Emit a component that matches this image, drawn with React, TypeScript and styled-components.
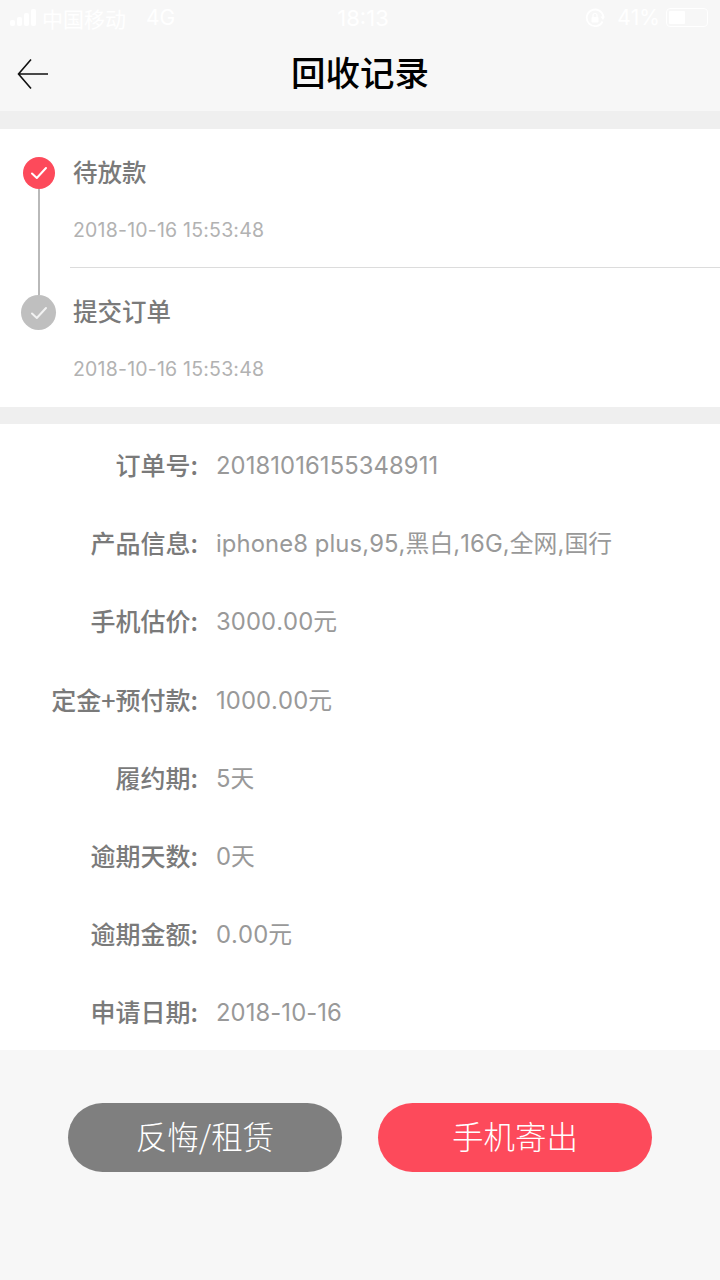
import * as React from 'react';
import styled, { createGlobalStyle } from 'styled-components';

const sans = 'Inter, "Noto Sans CJK SC", sans-serif';
const cjk = '"Noto Sans CJK SC", sans-serif';

const GlobalStyle = createGlobalStyle`
  html, body {
    margin: 0;
    background: #f7f7f7;
  }
  body {
    font-family: ${sans};
    font-kerning: none;
  }
`;

const Page = styled.div`
  display: flex;
  flex-direction: column;
  height: 1280px;
  overflow: hidden;
  background: #f7f7f7;
`;

const StatusBar = styled.div`
  align-items: center;
  color: #fff;
  display: grid;
  font-size: 21px;
  grid-template-columns: 1fr auto 1fr;
  height: 38px;
  padding: 0 12px 3px 10px;
  box-sizing: border-box;
`;

const StatusLeft = styled.div`
  align-items: center;
  display: flex;
  gap: 6px;
`;

const StatusRight = styled.div`
  align-items: center;
  display: flex;
  gap: 6px;
  justify-content: flex-end;
`;

const Carrier = styled.span`
  margin-right: 14px;
`;

const Clock = styled.span`
  font-size: 22px;
  margin-left: 8px;
`;

const Percent = styled.span`
  font-size: 21px;
  margin-left: 6px;
`;

const Signal = styled.div`
  align-items: flex-end;
  display: flex;
  gap: 2px;
  height: 17px;
`;

const SignalBar = styled.i<{ $h: number }>`
  background: #fff;
  border-radius: 2px;
  display: block;
  height: ${(p) => p.$h}px;
  width: 5px;
`;

const Battery = styled.div`
  border: 1.5px solid #fff;
  border-radius: 4px;
  box-sizing: border-box;
  height: 19px;
  padding: 2px;
  width: 42px;
`;

const BatteryLevel = styled.div`
  background: #fff;
  border-radius: 1px;
  height: 100%;
  width: 45%;
`;

const NavBar = styled.header`
  align-items: center;
  display: grid;
  grid-template-columns: 1fr auto 1fr;
  height: 73px;
  padding-bottom: 2px;
  box-sizing: border-box;
`;

const BackButton = styled.button`
  background: none;
  border: 0;
  display: flex;
  margin-left: 17px;
  padding: 0;
  width: 32px;
`;

const Title = styled.h1`
  color: #000;
  font-family: ${cjk};
  font-size: 34.5px;
  font-weight: 500;
  line-height: 48px;
  margin: -6px 0 0;
`;

const Band = styled.div<{ $h: number }>`
  background: #efefef;
  height: ${(p) => p.$h}px;
`;

const Section = styled.section`
  background: #fff;
`;

const Step = styled.div`
  display: grid;
  grid-template-columns: 70px 1fr;
  height: 139px;
`;

const Rail = styled.div<{ $last?: boolean }>`
  align-items: center;
  box-sizing: border-box;
  display: flex;
  flex-direction: column;
  padding-left: 7px;
  padding-top: ${(p) => (p.$last ? 0 : 28)}px;
`;

const Connector = styled.div<{ $grow?: boolean }>`
  background: #b9b9b9;
  flex: ${(p) => (p.$grow ? 1 : '0 0 27px')};
  width: 2px;
`;

const Dot = styled.div<{ $active?: boolean }>`
  align-items: center;
  background: ${(p) => (p.$active ? '#fd4a5b' : '#bfbfbf')};
  border-radius: 50%;
  display: flex;
  flex: none;
  height: ${(p) => (p.$active ? 32 : 35)}px;
  justify-content: center;
  width: ${(p) => (p.$active ? 32 : 35)}px;
`;

const StepBody = styled.div<{ $last?: boolean }>`
  border-bottom: ${(p) => (p.$last ? 'none' : '1px solid #dcdcdc')};
  display: flex;
  flex-direction: column;
  padding: 25px 0 0 3px;
`;

const StepTitle = styled.div`
  color: #7a7a7a;
  font-family: ${cjk};
  font-size: 24.5px;
  font-weight: 500;
  line-height: 36px;
`;

const StepTime = styled.div`
  color: #b2b2b2;
  font-size: 19.5px;
  letter-spacing: 0.2px;
  line-height: 24px;
  margin-top: 28px;
`;

const Details = styled.section`
  background: #fff;
  box-sizing: border-box;
  height: 626px;
  padding-top: 3px;
`;

const Row = styled.div`
  align-items: center;
  column-gap: 18px;
  display: grid;
  font-size: 23.8px;
  grid-template-columns: 198px 1fr;
  height: 78.2px;
  line-height: 34px;
`;

const Label = styled.div`
  color: #7a7a7a;
  font-family: ${cjk};
  font-size: 25px;
  font-weight: 500;
  margin-top: -4px;
  text-align: right;
  white-space: nowrap;
`;

const Value = styled.div`
  color: #999;
  letter-spacing: 0.1px;
  white-space: nowrap;
`;

const Actions = styled.div`
  display: flex;
  gap: 36px;
  justify-content: center;
  padding-top: 53px;
`;

const Action = styled.button<{ $primary?: boolean }>`
  background: ${(p) => (p.$primary ? '#fd4a5b' : '#7f7f7f')};
  border: 0;
  border-radius: 35px;
  color: #fff;
  font-family: ${cjk};
  font-size: 31.5px;
  font-weight: 300;
  height: 69px;
  padding: 0 0 5px;
  width: 274px;
`;

const Check = ({ color }: { color: string }) => (
  <svg width="18" height="14" viewBox="0 0 18 14" fill="none">
    <path d="M2 7.5 L6.8 12 L16 2" stroke={color} strokeWidth="2" strokeLinecap="round" strokeLinejoin="round" />
  </svg>
);

const rows = [
  ['订单号:', '20181016155348911'],
  ['产品信息:', 'iphone8 plus,95,黑白,16G,全网,国行'],
  ['手机估价:', '3000.00元'],
  ['定金+预付款:', '1000.00元'],
  ['履约期:', '5天'],
  ['逾期天数:', '0天'],
  ['逾期金额:', '0.00元'],
  ['申请日期:', '2018-10-16'],
];

export default function App() {
  return (
    <Page>
      <GlobalStyle />
      <StatusBar>
        <StatusLeft>
          <Signal>
            <SignalBar $h={6} />
            <SignalBar $h={9} />
            <SignalBar $h={13} />
            <SignalBar $h={17} />
          </Signal>
          <Carrier>中国移动</Carrier>
          <span>4G</span>
        </StatusLeft>
        <Clock>18:13</Clock>
        <StatusRight>
          <svg width="20" height="20" viewBox="0 0 20 20" fill="none">
            <path d="M17.5 13.5 A8.3 8.3 0 1 1 18.3 9" stroke="#fff" strokeWidth="1.8" />
            <path d="M15.5 8.5 L20 8.5 L18 12 Z" fill="#fff" />
            <rect x="6.5" y="9" width="7" height="5.5" rx="1" fill="#fff" />
            <path d="M8 9 V7.5 a2 2 0 0 1 4 0 V9" stroke="#fff" strokeWidth="1.2" />
          </svg>
          <Percent>41%</Percent>
          <Battery>
            <BatteryLevel />
          </Battery>
        </StatusRight>
      </StatusBar>
      <NavBar>
        <BackButton>
          <svg width="32" height="32" viewBox="0 0 32 32" fill="none">
            <path d="M31 16 H2 M14 1.5 L1.5 16 L14 30.5" stroke="#111" strokeWidth="1.6" />
          </svg>
        </BackButton>
        <Title>回收记录</Title>
        <span />
      </NavBar>
      <Band $h={18} />
      <Section>
        <Step>
          <Rail>
            <Dot $active>
              <Check color="#fff" />
            </Dot>
            <Connector $grow />
          </Rail>
          <StepBody>
            <StepTitle>待放款</StepTitle>
            <StepTime>2018-10-16 15:53:48</StepTime>
          </StepBody>
        </Step>
        <Step>
          <Rail $last>
            <Connector />
            <Dot>
              <Check color="#f2f2f2" />
            </Dot>
          </Rail>
          <StepBody $last>
            <StepTitle>提交订单</StepTitle>
            <StepTime>2018-10-16 15:53:48</StepTime>
          </StepBody>
        </Step>
      </Section>
      <Band $h={17} />
      <Details>
        {rows.map(([label, value]) => (
          <Row key={label}>
            <Label>{label}</Label>
            <Value>{value}</Value>
          </Row>
        ))}
      </Details>
      <Actions>
        <Action>反悔/租赁</Action>
        <Action $primary>手机寄出</Action>
      </Actions>
    </Page>
  );
}
